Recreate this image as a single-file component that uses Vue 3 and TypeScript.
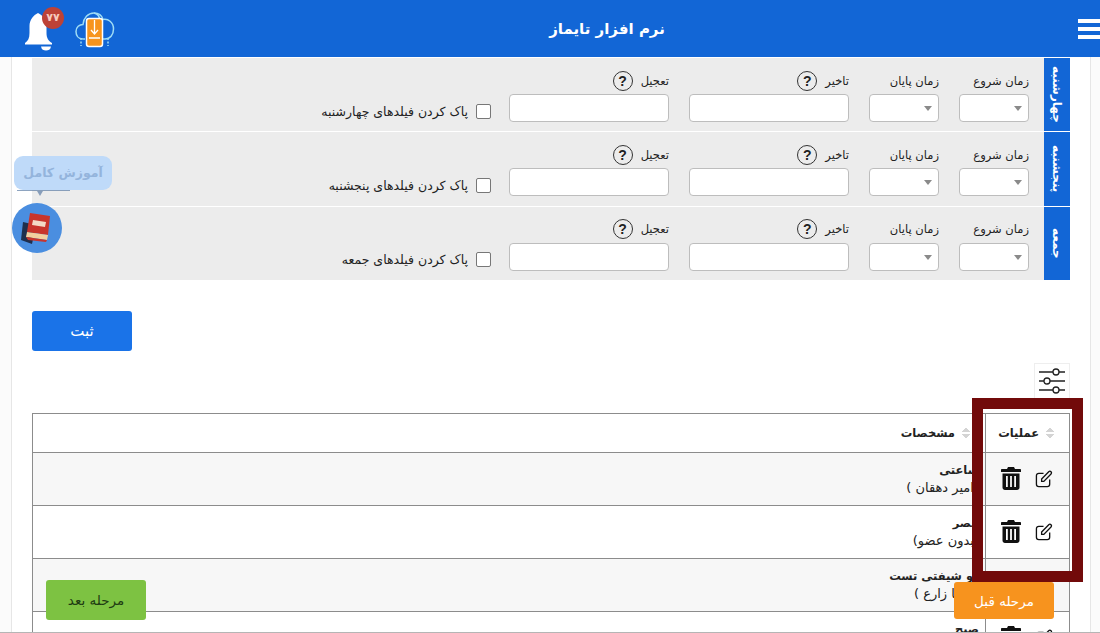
<script setup lang="ts">
const days = [
  { name: "چهارشنبه", clear: "پاک کردن فیلدهای چهارشنبه" },
  { name: "پنجشنبه", clear: "پاک کردن فیلدهای پنجشنبه" },
  { name: "جمعه", clear: "پاک کردن فیلدهای جمعه" },
];

const shifts = [
  { title: "ساعتی", member: "(امیر دهقان )" },
  { title: "عصر", member: "(بدون عضو)" },
  { title: "دو شیفتی تست", member: "(سینا زارع )" },
  { title: "صبح", member: "(بدون عضو)" },
];
</script>

<template>
  <div class="screen">
    <header class="topbar">
      <div class="burger"><i></i><i></i><i></i></div>
      <h1>نرم افزار تایماز</h1>
      <div class="top-icons">
        <svg class="cloud" width="40" height="40" viewBox="0 0 40 40" fill="none">
          <path d="M10 30H8C3 30 1 26 1 22.500C1 18 4.500 15.500 8 15.500C8.500 9 13 4 19 4C24 4 27 7 28 10.500C33 9.500 38.500 13 38.500 20C38.500 26 35 30 30 30H28" stroke="#9fdcf5" stroke-width="1.500" />
          <path d="M19 4C24 5 25 9 25 13" stroke="#9fdcf5" stroke-width="1.500" />
          <rect x="11.500" y="9.500" width="16" height="28" rx="2.500" fill="#f7941e" stroke="#fff" stroke-width="1.500" />
          <path d="M19.500 11V24M16 21L19.500 25L23 21M14 29H25" stroke="#fff" stroke-width="1.300" />
          <path d="M6 29V37M33 29V37" stroke="#9fdcf5" stroke-width="1.500" stroke-dasharray="2 1.500" />
        </svg>
        <div class="bell">
          <svg width="30" height="38" viewBox="0 0 30 38" fill="#fff">
            <path d="M1 30C4 28 5.500 25 5.500 20V13C5.500 7 9.500 2 14 0C18.500 2 22.500 7 22.500 13V20C22.500 25 24.500 28 28 30V31.500H1Z" />
            <path d="M17 33.500H27C26.500 36.500 24.500 37.500 22 37.500C19.500 37.500 17.500 36.500 17 33.500Z" />
          </svg>
          <span class="badge">۷۷</span>
        </div>
      </div>
    </header>

    <main class="page">
      <section class="days">
        <div v-for="day in days" :key="day.name" class="day">
          <div class="day-tab">{{ day.name }}</div>
          <div class="field narrow">
            <label>زمان شروع</label>
            <div class="select-wrap"><select></select></div>
          </div>
          <div class="field narrow">
            <label>زمان پایان</label>
            <div class="select-wrap"><select></select></div>
          </div>
          <div class="field wide">
            <label>تاخیر <span class="hint">?</span></label>
            <input type="text" />
          </div>
          <div class="field wide">
            <label>تعجیل <span class="hint">?</span></label>
            <input type="text" />
          </div>
          <label class="clear">
            <input type="checkbox" />
            <span>{{ day.clear }}</span>
          </label>
        </div>
      </section>

      <div class="actions">
        <button class="submit">ثبت</button>
      </div>

      <div class="table-tools">
        <button class="tools-btn">
          <svg width="30" height="30" viewBox="0 0 30 30" fill="none" stroke="#222" stroke-width="1.300">
            <path d="M2 6H16M22 6H28M2 15H7M13 15H28M2 24H16M22 24H28" />
            <circle cx="19" cy="6" r="3" />
            <circle cx="10" cy="15" r="3" />
            <circle cx="19" cy="24" r="3" />
          </svg>
        </button>
      </div>

      <table class="shifts">
        <thead>
          <tr>
            <th class="ops"><span class="sort"></span>عملیات</th>
            <th class="spec"><span class="sort"></span>مشخصات</th>
          </tr>
        </thead>
        <tbody>
          <tr v-for="shift in shifts" :key="shift.title">
            <td class="ops">
              <div class="op-icons">
                <svg width="18" height="18" viewBox="0 0 19 19" fill="none" stroke="#111" stroke-width="1.400">
                  <path d="M9 3.500H4C2.500 3.500 1.500 4.500 1.500 6V15C1.500 16.500 2.500 17.500 4 17.500H13C14.500 17.500 15.500 16.500 15.500 15V10" />
                  <path d="M7 9.500L14.500 1.800C15.200 1.100 16.200 1.100 16.900 1.800C17.600 2.500 17.600 3.500 16.900 4.200L9.300 12H7Z" />
                </svg>
                <svg width="20" height="23" viewBox="0 0 20 23" fill="#111">
                  <path d="M7 0H13L14 2H19C19.600 2 20 2.400 20 3V5H0V3C0 2.400 0.400 2 1 2H6Z" />
                  <path fill-rule="evenodd" d="M1.500 6.500H18.500V20.500C18.500 21.900 17.400 23 16 23H4C2.600 23 1.500 21.900 1.500 20.500ZM5 9V20H6.800V9ZM9.100 9V20H10.900V9ZM13.200 9V20H15V9Z" />
                </svg>
              </div>
            </td>
            <td class="spec">
              <strong>{{ shift.title }}</strong>
              <div>{{ shift.member }}</div>
            </td>
          </tr>
        </tbody>
      </table>
    </main>

    <div class="highlight"></div>

    <div class="guide">
      <div class="guide-bubble">آموزش کامل</div>
      <div class="guide-tail"></div>
      <div class="guide-circle">
        <svg width="32" height="34" viewBox="0 0 32 34">
          <path d="M2 11L15 14L11 33L0 29Z" fill="#1f2f4d" />
          <path d="M9 2L29 5L27 24L6 21Z" fill="#c8342c" />
          <path d="M12 9L25 11L24 16L11 14Z" fill="#f3d9c6" />
          <path d="M6 21L27 24L26 29L5 26Z" fill="#f3cf9f" />
          <path d="M5 26L26 29L25 31L7 29Z" fill="#c8342c" />
        </svg>
      </div>
    </div>

    <button class="step next">مرحله بعد</button>
    <button class="step prev">مرحله قبل</button>
  </div>
</template>

<style>
html,
body {
  height: 100%;
  overflow: hidden;
}
</style>

<style scoped>
.screen {
  position: relative;
  height: 633px;
  overflow: hidden;
  direction: rtl;
  background: #fbfbfb;
  border-bottom: 1px solid #b5b5b5;
  box-sizing: border-box;
  font-family: "DejaVu Sans", "Noto Sans", sans-serif;
  font-size: 12px;
  color: #222;
}

.topbar {
  position: relative;
  display: flex;
  align-items: center;
  justify-content: space-between;
  height: 57px;
  background: #1266d6;
  color: #fff;
}

.topbar h1 {
  position: absolute;
  left: 0;
  right: 0;
  margin: 0 0 0 114px;
  text-align: center;
  font-size: 15px;
  font-weight: 700;
}

.burger {
  display: flex;
  flex-direction: column;
  gap: 4px;
  width: 22px;
}

.burger i {
  display: block;
  height: 4px;
  background: #fff;
}

.top-icons {
  display: flex;
  align-items: center;
  gap: 21px;
  padding-left: 24px;
}

.bell {
  position: relative;
  height: 38px;
  width: 30px;
  margin-top: 6px;
}

.badge {
  position: absolute;
  top: -6px;
  left: 18px;
  width: 22px;
  height: 22px;
  line-height: 22px;
  border-radius: 50%;
  background: #bd4236;
  color: #f6c9bd;
  font-size: 11px;
  font-weight: 700;
  text-align: center;
}

.page {
  margin: 0 9px 0 11px;
  padding: 1px 20px 0;
  min-height: 600px;
  background: #fff;
  border-inline: 1px solid #e6e6e6;
}

.days {
  display: grid;
  gap: 1px;
}

.day {
  display: flex;
  gap: 20px;
  height: 73.33px;
  background: #ececec;
}

.day-tab {
  display: flex;
  align-items: center;
  justify-content: center;
  width: 26px;
  margin-left: -5px;
  writing-mode: vertical-rl;
  background: #1266d6;
  color: #fff;
  font-size: 12px;
  font-weight: 700;
}

.field {
  display: flex;
  flex-direction: column;
  padding-top: 9px;
}

.field label {
  display: flex;
  align-items: center;
  gap: 8px;
  height: 27px;
  font-size: 11.5px;
}

.narrow {
  width: 70px;
}

.wide {
  width: 160px;
}

.hint {
  display: inline-flex;
  align-items: center;
  justify-content: center;
  width: 20px;
  height: 20px;
  box-sizing: border-box;
  border: 1px solid #333;
  border-radius: 50%;
  font-family: "Liberation Sans", sans-serif;
  font-size: 14px;
  font-weight: 700;
}

.field input,
.select-wrap select {
  width: 100%;
  height: 28px;
  box-sizing: border-box;
  border: 1px solid #bdbdbd;
  border-radius: 4px;
  background: #fff;
  appearance: none;
  outline: none;
}

.select-wrap {
  position: relative;
  height: 28px;
}

.select-wrap::after {
  content: "";
  position: absolute;
  top: 12px;
  right: 7px;
  border-top: 5px solid #8a8a8a;
  border-inline: 4px solid transparent;
}

.clear {
  display: flex;
  align-items: center;
  gap: 8px;
  height: 28px;
  margin-top: 39px;
  margin-right: -2px;
  font-size: 12.5px;
}

.clear input {
  width: 15px;
  height: 15px;
  margin: 0;
  appearance: none;
  border: 1px solid #777;
  border-radius: 2px;
  background: #fff;
}

.actions {
  display: flex;
  justify-content: flex-end;
  padding-top: 31px;
}

.submit {
  width: 100px;
  height: 40px;
  border: none;
  border-radius: 3px;
  background: #1a73e8;
  color: #fff;
  font: inherit;
  font-size: 15px;
}

.table-tools {
  display: flex;
  padding-top: 12px;
}

.tools-btn {
  display: flex;
  align-items: center;
  justify-content: center;
  width: 36px;
  height: 37px;
  padding: 0;
  border: 1px solid #eee;
  background: #fff;
}

.shifts {
  width: 100%;
  margin-top: 13px;
  border-collapse: collapse;
  table-layout: fixed;
}

.shifts th,
.shifts td {
  box-sizing: border-box;
  border: 1px solid #8c8c8c;
  text-align: right;
}

.shifts th {
  height: 39px;
  padding: 0 15px 0 0;
  font-size: 11.5px;
  font-weight: 700;
  white-space: nowrap;
}

.shifts td {
  height: 53px;
  padding: 0 13px 0 0;
  font-size: 13px;
  line-height: 18px;
}

.shifts tbody tr:nth-child(odd) {
  background: #f7f7f7;
}

.shifts .ops {
  width: 84px;
}

.shifts td.spec {
  padding-right: 6px;
}

.shifts strong {
  font-weight: 700;
  font-size: 11.5px;
}

.sort {
  display: inline-block;
  width: 8px;
  height: 12px;
  margin-left: 7px;
  vertical-align: middle;
  background:
    linear-gradient(135deg, transparent 50%, #d4d4d4 50%) 0 0 / 4px 5px no-repeat,
    linear-gradient(225deg, transparent 50%, #d4d4d4 50%) 4px 0 / 4px 5px no-repeat,
    linear-gradient(45deg, transparent 50%, #d4d4d4 50%) 0 7px / 4px 5px no-repeat,
    linear-gradient(315deg, transparent 50%, #d4d4d4 50%) 4px 7px / 4px 5px no-repeat;
}

.op-icons {
  display: flex;
  align-items: center;
  gap: 14px;
  padding-right: 3px;
}

.highlight {
  position: absolute;
  left: 972px;
  top: 398px;
  width: 111px;
  height: 184px;
  box-sizing: border-box;
  border: 11px solid #720a0a;
}

.guide {
  position: absolute;
  left: 12px;
  top: 156px;
  width: 100px;
  direction: ltr;
}

.guide-bubble {
  height: 34px;
  margin-left: 2px;
  direction: rtl;
  line-height: 34px;
  border-radius: 9px;
  background: #bfdaf9;
  color: #94b4dc;
  font-size: 12.5px;
  font-weight: 700;
  text-align: center;
}

.guide-tail {
  position: relative;
  width: 53px;
  margin-left: 5px;
  border-top: 1px solid #5f7ea6;
  opacity: 0.7;
}

.guide-tail::after {
  content: "";
  position: absolute;
  top: 0;
  left: 20px;
  border-top: 5px solid #5f7ea6;
  border-inline: 3px solid transparent;
}

.guide-circle {
  display: flex;
  align-items: center;
  justify-content: center;
  width: 50px;
  height: 50px;
  margin-top: 12px;
  border-radius: 50%;
  background: #4a8ee0;
}

.step {
  position: absolute;
  width: 100px;
  border: none;
  border-radius: 3px;
  font: inherit;
  font-size: 13.5px;
}

.next {
  left: 46px;
  top: 580px;
  height: 40px;
  background: #7dc242;
  color: #1d3a12;
}

.prev {
  left: 954px;
  top: 582px;
  height: 37px;
  background: #f7931e;
  color: #fff;
}
</style>
